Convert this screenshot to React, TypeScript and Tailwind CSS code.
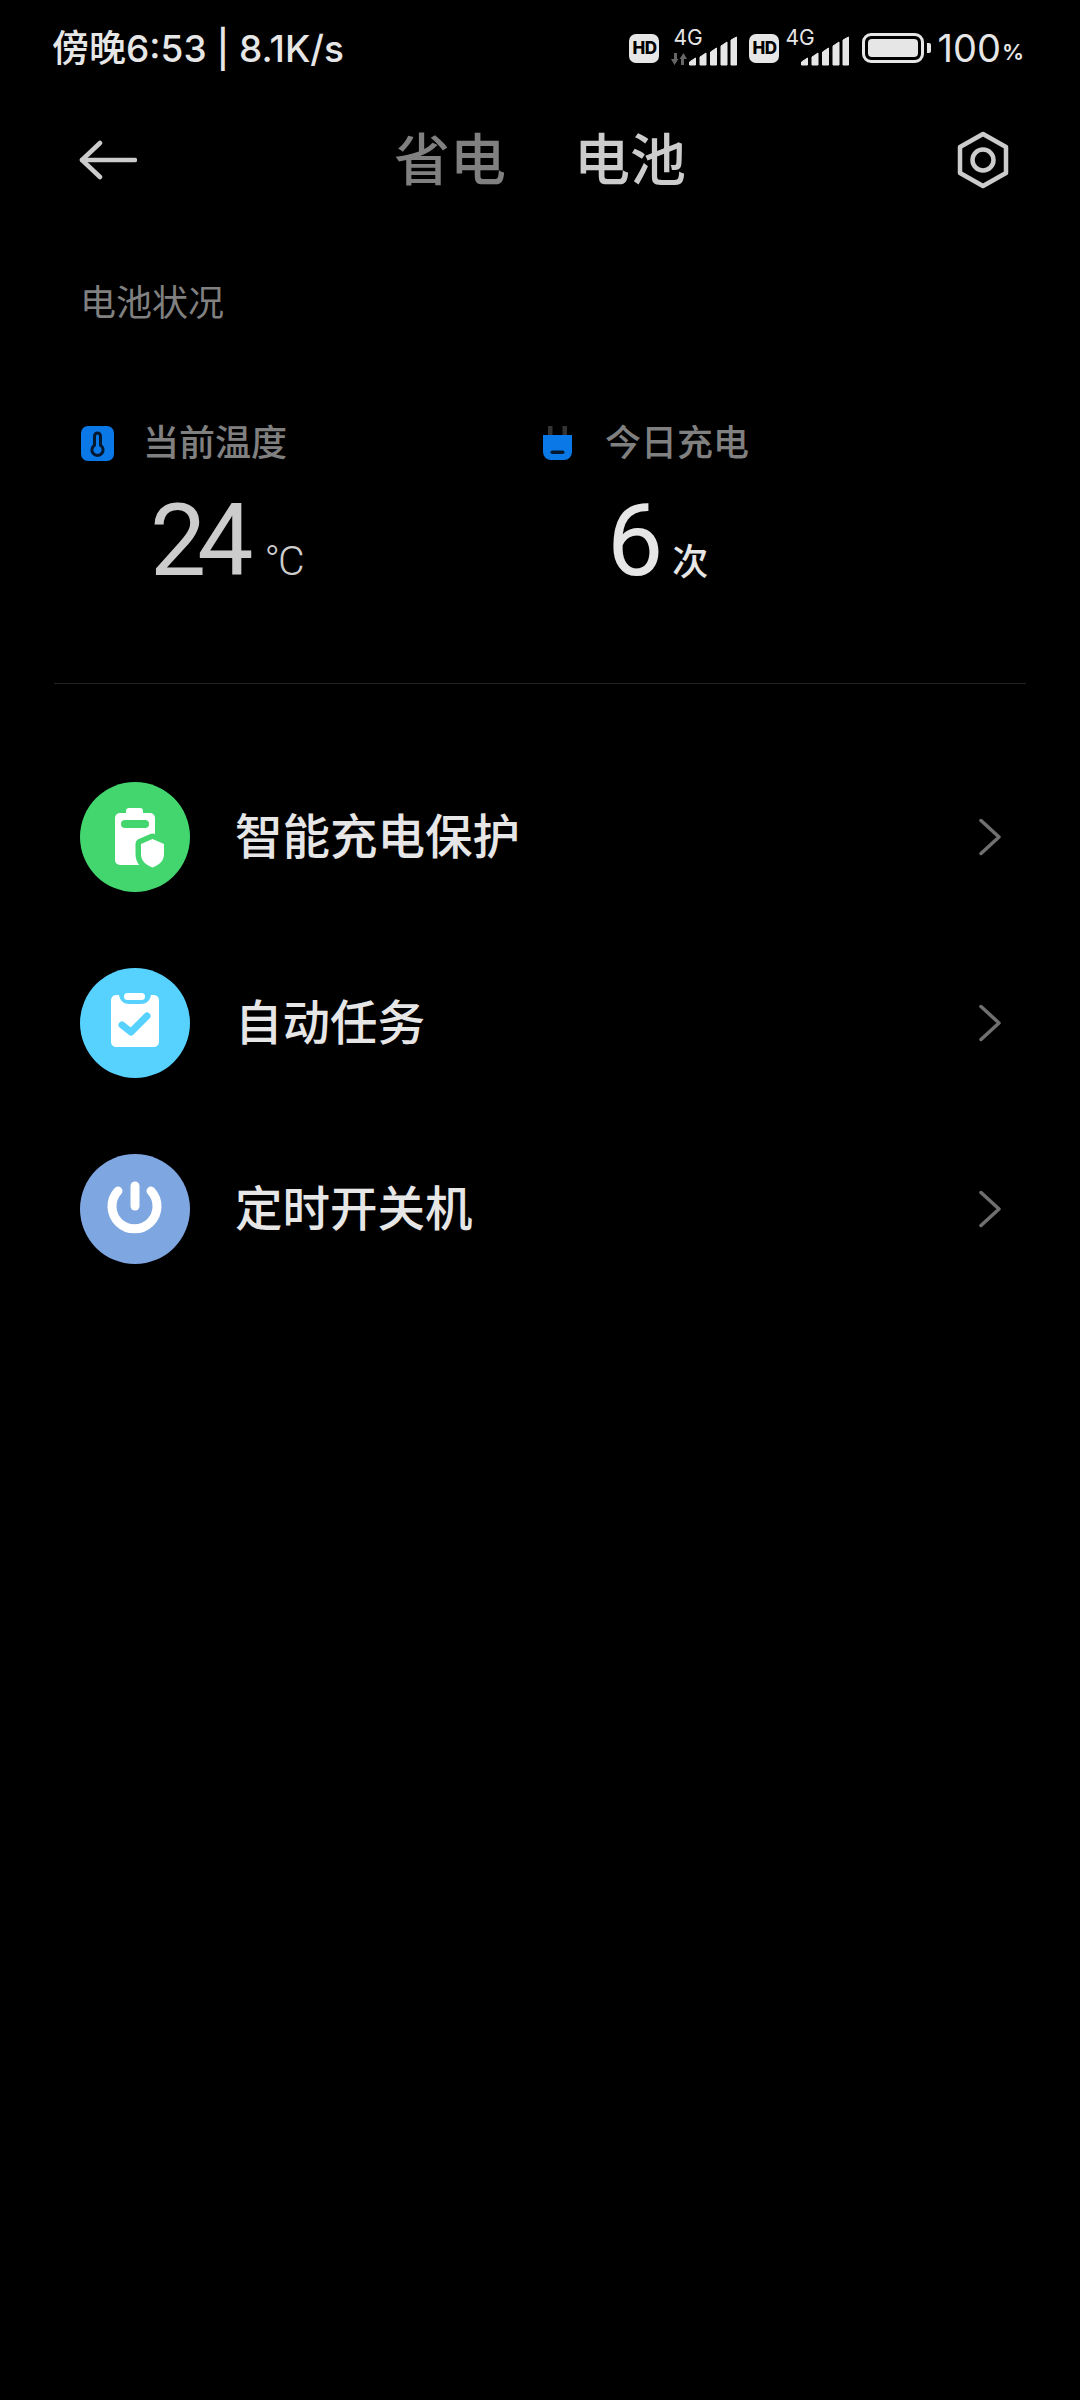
function HdBadge() {
  return (
    <div className="flex h-[29px] w-[30px] items-center justify-center rounded-[7px] bg-[#e6e6e6] text-[17px] font-extrabold leading-none tracking-[-0.5px] text-black">
      HD
    </div>
  );
}

function SignalBars() {
  return (
    <svg width="48" height="30" viewBox="0 0 48 30" fill="#e6e6e6" stroke="#e6e6e6" strokeWidth="1" strokeLinejoin="round">
      <polygon points="0.5,29 0.5,26 6.5,22 6.5,29" />
      <polygon points="11,29 11,21 17,17 17,29" />
      <polygon points="21.5,29 21.5,16 27.5,12 27.5,29" />
      <polygon points="32,29 32,10 38,6 38,29" />
      <polygon points="42,29 42,4 47.5,1 47.5,29" />
    </svg>
  );
}

function Signal({ arrows }: { arrows?: boolean }) {
  return (
    <div className={arrows ? "flex h-[36px] w-[66px] items-end justify-end" : "flex h-[36px] w-[64px] items-end justify-end"}>
      <div className="relative flex items-end">
        {arrows && (
          <svg className="absolute bottom-[1px] left-[-18px]" width="16" height="12" viewBox="0 0 16 12" fill="#666666">
            <path d="M3 0H6V6H7.5L3.5 12L0 6H3Z" />
            <path d="M10 12H13V6H16L12.5 0L8.5 6H10Z" />
          </svg>
        )}
        <span className="absolute left-[-16px] top-[-9px] text-[21px] leading-none text-[#e6e6e6]">4G</span>
        <SignalBars />
      </div>
    </div>
  );
}

function Battery() {
  return (
    <div className="flex items-center gap-[3px]">
      <div className="h-[30px] w-[62px] rounded-[9px] border-[3px] border-[#e6e6e6] p-[3px]">
        <div className="h-full w-full rounded-[4px] bg-[#e6e6e6]" />
      </div>
      <div className="h-[10px] w-[4px] rounded-r-[2px] bg-[#e6e6e6]" />
    </div>
  );
}

function StatusBar() {
  return (
    <div className="flex h-[96px] items-center justify-between pl-[52px] pr-[56px] text-[#e6e6e6]">
      <span className="text-[37px] font-medium leading-none">傍晚6:53 | 8.1K/s</span>
      <div className="flex items-center">
        <HdBadge />
        <div className="ml-[12px]">
          <Signal arrows />
        </div>
        <div className="ml-[12px]">
          <HdBadge />
        </div>
        <div className="ml-[6px]">
          <Signal />
        </div>
        <div className="ml-[13px]">
          <Battery />
        </div>
        <span className="ml-[6px] text-[38px] leading-none">100</span>
        <span className="ml-[1px] mt-[8px] text-[22px] font-semibold leading-none">%</span>
      </div>
    </div>
  );
}

function Header() {
  return (
    <div className="grid h-[128px] grid-cols-[1fr_auto_1fr] items-center px-[70px]">
      <svg className="ml-[9px]" width="58" height="40" viewBox="0 0 58 40" fill="none" stroke="#cccccc" strokeWidth="4.5" strokeLinecap="round" strokeLinejoin="round">
        <path d="M56 20H3" />
        <path d="M21 3L3 20L21 37" />
      </svg>
      <div className="flex gap-[68px] text-[56px] font-medium leading-none">
        <span className="text-[#808080]">省电</span>
        <span className="text-[#cccccc]">电池</span>
      </div>
      <div className="flex justify-end">
        <svg width="54" height="58" viewBox="0 0 54 58" fill="none" stroke="#cccccc" strokeWidth="4.5" strokeLinejoin="round">
          <path d="M27 3L50 16V42L27 55L4 42V16Z" />
          <circle cx="27" cy="29" r="10.5" />
        </svg>
      </div>
    </div>
  );
}

function ThermometerIcon() {
  return (
    <svg width="34" height="35" viewBox="0 0 34 35">
      <rect width="33" height="35" rx="7" fill="#0a78e6" />
      <path d="M16.5 7a3 3 0 0 1 3 3v9.2a5.6 5.6 0 1 1-6 0V10a3 3 0 0 1 3-3Z" fill="none" stroke="#04182f" strokeWidth="3" />
    </svg>
  );
}

function PlugIcon() {
  return (
    <svg width="30" height="35" viewBox="0 0 30 35">
      <rect x="5" y="0" width="4.5" height="10" fill="#333333" />
      <rect x="19.5" y="0" width="4.5" height="10" fill="#333333" />
      <path d="M0 9H29V26a8 8 0 0 1-8 8H8a8 8 0 0 1-8-8Z" fill="#0a78e6" />
      <rect x="7.5" y="24.5" width="14" height="3.5" rx="1.75" fill="#04182f" />
    </svg>
  );
}

function Stat({
  icon,
  label,
  value,
  unit,
  valueClass,
  unitClass,
}: {
  icon: React.ReactNode;
  label: string;
  value: string;
  unit: string;
  valueClass: string;
  unitClass: string;
}) {
  return (
    <div>
      <div className="flex h-[50px] items-center">
        <div className="w-[62px]">{icon}</div>
        <span className="text-[36px] font-medium leading-none text-[#808080]">{label}</span>
      </div>
      <div className={`mt-[23px] flex items-baseline font-['Roboto','Noto_Sans_CJK_SC',sans-serif] ${valueClass}`}>
        <span className="text-[100px] leading-[100px] tracking-[-9px]">{value}</span>
        <span className={unitClass}>{unit}</span>
      </div>
    </div>
  );
}

function GreenIcon() {
  return (
    <svg width="110" height="110" viewBox="0 0 110 110">
      <rect x="46" y="26" width="17" height="10" rx="3" fill="#ffffff" />
      <rect x="35" y="31" width="40" height="52" rx="5" fill="#ffffff" />
      <rect x="41" y="38" width="28" height="8" rx="4" fill="#43d66f" />
      <path d="M72.5 57L84 62V72C84 79 79 83 72.5 85.5C66 83 61 79 61 72V62Z" fill="#ffffff" stroke="#43d66f" strokeWidth="11" strokeLinejoin="round" paintOrder="stroke" />
    </svg>
  );
}

function BlueIcon() {
  return (
    <svg width="110" height="110" viewBox="0 0 110 110">
      <path d="M37 27H39C40 33 44 36 49 36H61C66 36 70 33 71 27H73C77 27 79 29 79 33V73C79 77 77 79 73 79H37C33 79 31 77 31 73V33C31 29 33 27 37 27Z" fill="#ffffff" />
      <rect x="44" y="25" width="21" height="7" rx="3.5" fill="#ffffff" />
      <path d="M42 57L51 64L67 48" fill="none" stroke="#57d2ff" strokeWidth="7" strokeLinecap="round" strokeLinejoin="round" />
    </svg>
  );
}

function PowerIcon() {
  return (
    <svg width="110" height="110" viewBox="0 0 110 110" fill="none" stroke="#ffffff" strokeWidth="9" strokeLinecap="round">
      <path d="M38 37A22.5 22.5 0 1 0 71 37" />
      <path d="M55 32V52" />
    </svg>
  );
}

function MenuRow({ icon, color, label }: { icon: React.ReactNode; color: string; label: string }) {
  return (
    <div className="flex h-[186px] items-center pl-[80px] pr-[79px]">
      <div className={`h-[110px] w-[110px] rounded-full ${color}`}>{icon}</div>
      <span className="ml-[45px] flex-1 text-[47.5px] font-medium leading-none text-[#e6e6e6]">{label}</span>
      <svg width="22" height="40" viewBox="0 0 22 40" fill="none" stroke="#707070" strokeWidth="3.5" strokeLinecap="round" strokeLinejoin="round">
        <path d="M2 3.5L20 20L2 36.5" />
      </svg>
    </div>
  );
}

export default function App() {
  return (
    <div className="min-h-[2400px] bg-black font-['Inter','Noto_Sans_CJK_SC',sans-serif]">
      <StatusBar />
      <Header />

      <div className="pl-[80px] pt-[54px]">
        <p className="text-[36px] leading-[50px] text-[#808080]">电池状况</p>
      </div>

      <div className="mt-[90px] grid grid-cols-[462px_1fr] pl-[81px]">
        <Stat
          icon={<ThermometerIcon />}
          label="当前温度"
          value="24"
          unit="°C"
          valueClass="pl-[69px] text-[#cccccc]"
          unitClass="ml-[20px] text-[41px] font-light leading-none tracking-[-2px]"
        />
        <Stat
          icon={<PlugIcon />}
          label="今日充电"
          value="6"
          unit="次"
          valueClass="pl-[64px] text-[#e6e6e6]"
          unitClass="ml-[18px] text-[36px] font-medium leading-none"
        />
      </div>

      <div className="mx-[54px] mt-[92px] h-[1px] bg-[#222222]" />

      <div className="mt-[60px]">
        <MenuRow icon={<GreenIcon />} color="bg-[#43d66f]" label="智能充电保护" />
        <MenuRow icon={<BlueIcon />} color="bg-[#57d2ff]" label="自动任务" />
        <MenuRow icon={<PowerIcon />} color="bg-[#7ea6e0]" label="定时开关机" />
      </div>
    </div>
  );
}
